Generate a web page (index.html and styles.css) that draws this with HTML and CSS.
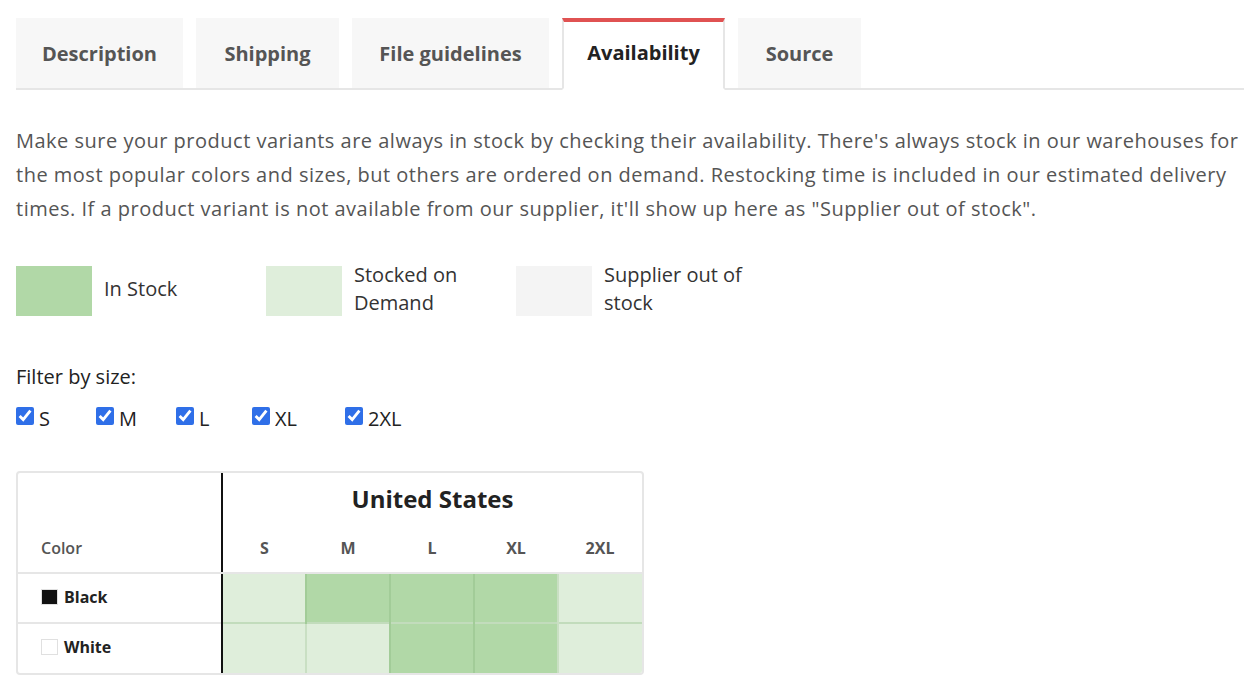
FILE: index.html
```html
<!DOCTYPE html>
<html lang="en">
<head>
<meta charset="utf-8">
<title>Availability</title>
<link rel="stylesheet" href="styles.css">
</head>
<body>
<div class="page">
  <nav class="tabs">
    <div class="tab">Description</div>
    <div class="tab">Shipping</div>
    <div class="tab">File guidelines</div>
    <div class="tab active">Availability</div>
    <div class="tab">Source</div>
  </nav>

  <p class="intro">Make sure your product variants are always in stock by checking their availability. There's always stock in our warehouses for the most popular colors and sizes, but others are ordered on demand. Restocking time is included in our estimated delivery times. If a product variant is not available from our supplier, it'll show up here as "Supplier out of stock".</p>

  <div class="legend">
    <div class="legend-item"><span class="swatch in"></span><span class="legend-label">In Stock</span></div>
    <div class="legend-item"><span class="swatch demand"></span><span class="legend-label">Stocked on Demand</span></div>
    <div class="legend-item"><span class="swatch out"></span><span class="legend-label">Supplier out of stock</span></div>
  </div>

  <div class="filter">
    <div class="filter-title">Filter by size:</div>
    <div class="sizes">
      <label class="size s-s"><input type="checkbox" checked> S</label>
      <label class="size s-m"><input type="checkbox" checked> M</label>
      <label class="size s-l"><input type="checkbox" checked> L</label>
      <label class="size s-xl"><input type="checkbox" checked> XL</label>
      <label class="size"><input type="checkbox" checked> 2XL</label>
    </div>
  </div>

  <div class="table-wrap">
    <table class="avail">
      <thead>
        <tr class="region-row">
          <th class="color-col"></th>
          <th colspan="5" class="region">United States</th>
        </tr>
        <tr class="size-row">
          <th class="color-col color-head">Color</th>
          <th>S</th><th>M</th><th>L</th><th>XL</th><th>2XL</th>
        </tr>
      </thead>
      <tbody>
        <tr>
          <td class="color-col name"><span class="chip black"></span>Black</td>
          <td class="c demand"></td><td class="c in"></td><td class="c in"></td><td class="c in"></td><td class="c demand"></td>
        </tr>
        <tr>
          <td class="color-col name"><span class="chip white"></span>White</td>
          <td class="c demand"></td><td class="c demand"></td><td class="c in"></td><td class="c in"></td><td class="c demand"></td>
        </tr>
      </tbody>
    </table>
  </div>
</div>
</body>
</html>
```

FILE: styles.css
```css
* { box-sizing: border-box; }
html, body { margin: 0; padding: 0; background: #fff; }
body {
  font-family: "Open Sans", "Liberation Sans", sans-serif;
  color: #333;
}
.page { padding: 18px 16px 0 16px; }

.tabs {
  display: flex;
  gap: 13px;
  border-bottom: 2px solid #e6e6e6;
  height: 72px;
}
.tab {
  height: 72px;
  display: flex;
  align-items: center;
  justify-content: center;
  background: #f7f7f7;
  font-size: 20px;
  font-weight: 700;
  color: #555;
  border-bottom: 2px solid #e6e6e6;
  padding-bottom: 0;
}
.tab:nth-child(1) { width: 167px; }
.tab:nth-child(2) { width: 143px; }
.tab:nth-child(3) { width: 197px; }
.tab:nth-child(4) { width: 163px; }
.tab:nth-child(5) { width: 123px; }
.tab.active {
  background: #fff;
  color: #222;
  border: 2px solid #e6e6e6;
  border-top: 4px solid #e05252;
  border-bottom: 2px solid #fff;
  padding-bottom: 6px;
}

.intro {
  margin: 34px 0 0 0;
  font-size: 20px;
  line-height: 34px;
  color: #555;
  letter-spacing: 0.5px;
}

.legend {
  display: flex;
  margin-top: 37px;
}
.legend-item {
  width: 250px;
  display: flex;
  align-items: center;
  gap: 12px;
}
.swatch {
  flex: none;
  width: 76px;
  height: 50px;
}
.swatch.in { background: #b1d8a7; }
.swatch.demand { background: #dfeedb; }
.swatch.out { background: #f4f4f4; }
.legend-label {
  font-size: 20px;
  line-height: 28px;
  color: #333;
  width: 160px;
  position: relative;
  top: -2px;
}

.filter { margin-top: 46px; }
.filter-title { font-size: 20px; line-height: 24px; color: #222; }
.sizes {
  display: flex;
  margin-top: 16px;
}
.size {
  display: flex;
  align-items: center;
  gap: 5px;
  font-size: 20px;
  color: #222;
  width: 80px;
}
.size input {
  margin: 0;
  width: 18px;
  height: 18px;
  accent-color: #2f6fe8;
  position: relative;
  top: -3px;
}
.size.s-l { width: 76px; }
.size.s-xl { width: 93px; }

.table-wrap {
  margin-top: 39px;
  width: 628px;
  border: 2px solid #e6e6e6;
  border-radius: 4px;
  overflow: hidden;
}
.avail {
  border-collapse: collapse;
  width: 100%;
  table-layout: fixed;
}
.avail th, .avail td { padding: 0; }
.avail .color-col {
  width: 204px;
  border-right: 2px solid #111;
}
.region-row th { height: 46px; }
.region {
  font-size: 24px;
  font-weight: 700;
  color: #222;
  text-align: center;
  vertical-align: top;
  line-height: 30px;
  padding-top: 11px !important;
}
.size-row th {
  height: 54px;
  font-size: 16px;
  font-weight: 700;
  line-height: 20px;
  color: #555;
  text-align: center;
  vertical-align: bottom;
  padding-bottom: 14px;
  border-bottom: 2px solid #e6e6e6;
}
.size-row th.color-head { text-align: left; padding-left: 23px; font-weight: 600; }
.avail tbody tr { height: 50px; }
.avail tbody tr + tr td { border-top: 2px solid #e6e6e6; }
.avail td.c { border-left: 2px solid #c9dfc3; }
.avail td.color-col + td.c { border-left: none; }
.avail tbody tr + tr td.c { border-top: 2px solid #c2dcbc; }
.c.in { background: #b1d8a7; }
.c.demand { background: #dfeedb; }
.c.in { border-left-color: #a2cc98 !important; }
.name {
  font-size: 16px;
  font-weight: 700;
  color: #222;
  padding-left: 23px !important;
  padding-bottom: 3px !important;
}
.chip {
  display: inline-block;
  width: 17px;
  height: 16px;
  vertical-align: -2px;
  margin-right: 6px;
  border: 1px solid #e0e0e0;
}
.chip.black { background: #111; }
.chip.white { background: #fff; }
```
